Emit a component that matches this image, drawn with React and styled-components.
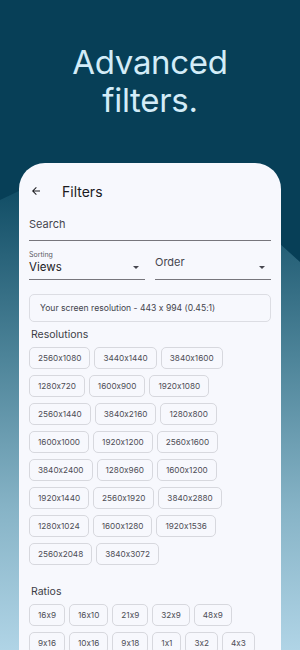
import React from "react";
import styled, { createGlobalStyle } from "styled-components";

const GlobalStyle = createGlobalStyle`
  html, body { margin: 0; padding: 0; }
  body {
    font-family: "Inter", "Noto Sans", sans-serif;
    font-feature-settings: "calt" 0;
  }
`;

const resolutions = [
  ["2560x1080", "3440x1440", "3840x1600"],
  ["1280x720", "1600x900", "1920x1080"],
  ["2560x1440", "3840x2160", "1280x800"],
  ["1600x1000", "1920x1200", "2560x1600"],
  ["3840x2400", "1280x960", "1600x1200"],
  ["1920x1440", "2560x1920", "3840x2880"],
  ["1280x1024", "1600x1280", "1920x1536"],
  ["2560x2048", "3840x3072"],
];

const ratios = ["16x9", "16x10", "21x9", "32x9", "48x9", "9x16", "10x16", "9x18", "1x1", "3x2", "4x3"];

const Page = styled.div`
  position: relative;
  width: 300px;
  height: 650px;
  overflow: hidden;
  background: linear-gradient(180deg, #0c4a62 0%, #134f67 30%, #4d8499 55%, #86b3c6 78%, #b0d4e6 100%);

  &::before {
    content: "";
    position: absolute;
    inset: 0;
    background: #073f57;
    clip-path: polygon(0 0, 100% 0, 100% 262px, 93% 243px, 7% 190px, 0 200px);
  }
`;

const Content = styled.div`
  position: relative;
  display: flex;
  flex-direction: column;
  align-items: center;
`;

const Heading = styled.h1`
  margin: 43px 0 0;
  font-family: "Inter", sans-serif;
  font-weight: 400;
  font-size: 33px;
  line-height: 38px;
  letter-spacing: -0.3px;
  color: #d3ecf8;
  text-align: center;
`;

const Card = styled.div`
  align-self: stretch;
  margin: 44px 19px 0;
  height: 520px;
  background: #f7f8fd;
  border-radius: 26px 26px 0 0;
  padding: 16px 10px 0;
  display: flex;
  flex-direction: column;
  color: #1c1b20;
`;

const TopBar = styled.div`
  display: flex;
  align-items: center;
  gap: 20px;
  height: 24px;
`;

const Title = styled.span`
  font-size: 14px;
  color: #1b1b1f;
`;

const Field = styled.div`
  flex: none;
  display: flex;
  flex-direction: column;
  justify-content: flex-end;
  border-bottom: 1px solid #77767c;
  height: ${(p) => p.$h}px;
  position: relative;
`;

const FieldText = styled.span`
  font-size: ${(p) => p.$size || 11}px;
  color: ${(p) => p.$color || "#46464f"};
  padding-bottom: ${(p) => p.$pb || 8}px;
  line-height: 1.2;
`;

const SmallLabel = styled.span`
  font-size: 7px;
  color: #5a5a62;
  line-height: 1;
  margin-bottom: 3px;
`;

const SelectRow = styled.div`
  display: flex;
  gap: 10px;
  margin-top: 6px;

  & > ${Field} {
    flex: 1 1 0;
  }
`;

const Caret = styled.span`
  position: absolute;
  right: 6px;
  bottom: 10px;
  width: 0;
  height: 0;
  border-left: 3px solid transparent;
  border-right: 3px solid transparent;
  border-top: 3px solid #46464f;
`;

const InfoBox = styled.div`
  margin-top: 14px;
  border: 1px solid #dcdde3;
  border-radius: 5px;
  height: 26px;
  display: flex;
  align-items: center;
  padding-left: 10px;
  font-size: 8.6px;
  color: #44444c;
`;

const SectionTitle = styled.div`
  font-size: 10.5px;
  color: #3d3d45;
  padding-left: 2px;
  margin-top: ${(p) => p.$mt}px;
  margin-bottom: 6px;
`;

const Chips = styled.div`
  display: flex;
  flex-wrap: wrap;
  gap: 6px 4px;
  max-width: ${(p) => p.$max}px;
`;

const Chip = styled.div`
  height: 22px;
  box-sizing: border-box;
  border: 1px solid #d7d8de;
  border-radius: 5px;
  padding: 0 8px;
  display: flex;
  align-items: center;
  font-size: 8.2px;
  color: #4d4d55;
  background: #f7f8fd;
`;

const ChipRow = styled.div`
  display: flex;
  gap: 4px;
`;

const ChipStack = styled.div`
  display: flex;
  flex-direction: column;
  gap: 6px;
`;

const BackArrow = () => (
  <svg width="12" height="12" viewBox="0 0 24 24" style={{ marginLeft: 1 }}>
    <path d="M20 11H7.83l5.59-5.59L12 4l-8 8 8 8 1.41-1.41L7.83 13H20v-2z" fill="#1b1b1f" />
  </svg>
);

export default function App() {
  return (
    <>
      <GlobalStyle />
      <Page>
        <Content>
          <Heading>
            Advanced
            <br />
            filters.
          </Heading>
          <Card>
            <TopBar>
              <BackArrow />
              <Title>Filters</Title>
            </TopBar>
            <Field $h={37}>
              <FieldText $pb={9}>Search</FieldText>
            </Field>
            <SelectRow>
              <Field $h={32}>
                <SmallLabel>Sorting</SmallLabel>
                <FieldText $size={11.5} $color="#1b1b1f" $pb={4}>Views</FieldText>
                <Caret />
              </Field>
              <Field $h={32}>
                <FieldText $size={11} $pb={10}>Order</FieldText>
                <Caret />
              </Field>
            </SelectRow>
            <InfoBox>Your screen resolution - 443 x 994 (0.45:1)</InfoBox>
            <SectionTitle $mt={6}>Resolutions</SectionTitle>
            <ChipStack>
              {resolutions.map((row, i) => (
                <ChipRow key={i}>
                  {row.map((r) => (
                    <Chip key={r}>{r}</Chip>
                  ))}
                </ChipRow>
              ))}
            </ChipStack>
            <SectionTitle $mt={20}>Ratios</SectionTitle>
            <Chips $max={240}>
              {ratios.map((r) => (
                <Chip key={r}>{r}</Chip>
              ))}
            </Chips>
          </Card>
        </Content>
      </Page>
    </>
  );
}
